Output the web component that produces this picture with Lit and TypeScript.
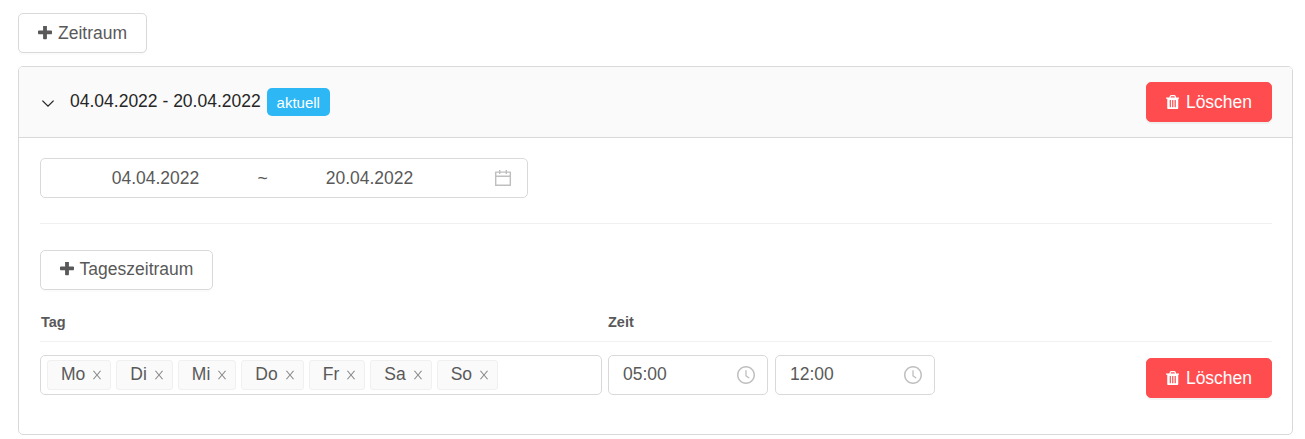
import { LitElement, html, css, svg } from "lit";
import { customElement } from "lit/decorators.js";

const plusIcon = html`<svg class="plus" viewBox="192 192 1408 1408" fill="currentColor"><path d="M1600 736v192q0 40-28 68t-68 28h-416v416q0 40-28 68t-68 28h-192q-40 0-68-28t-28-68v-416h-416q-40 0-68-28t-28-68v-192q0-40 28-68t68-28h416v-416q0-40 28-68t68-28h192q40 0 68 28t28 68v416h416q40 0 68 28t28 68z"/></svg>`;
const trashIcon = html`<svg class="trash" viewBox="192 128 1408 1536" fill="currentColor"><path d="M704 1376v-704q0-14-9-23t-23-9h-64q-14 0-23 9t-9 23v704q0 14 9 23t23 9h64q14 0 23-9t9-23zm256 0v-704q0-14-9-23t-23-9h-64q-14 0-23 9t-9 23v704q0 14 9 23t23 9h64q14 0 23-9t9-23zm256 0v-704q0-14-9-23t-23-9h-64q-14 0-23 9t-9 23v704q0 14 9 23t23 9h64q14 0 23-9t9-23zm-544-992h448l-48-117q-7-9-17-11h-317q-10 2-17 11zm928 32v64q0 14-9 23t-23 9h-96v948q0 83-47 143.5t-113 60.5h-832q-66 0-113-58.5t-47-141.5v-952h-96q-14 0-23-9t-9-23v-64q0-14 9-23t23-9h309l70-167q15-37 54-63t79-26h320q40 0 79 26t54 63l70 167h309q14 0 23 9t9 23z"/></svg>`;
const calendarIcon = html`<svg class="ant" viewBox="64 64 896 896" fill="currentColor"><path d="M880 184H712v-64c0-4.4-3.6-8-8-8h-56c-4.4 0-8 3.6-8 8v64H384v-64c0-4.4-3.6-8-8-8h-56c-4.4 0-8 3.6-8 8v64H144c-17.7 0-32 14.3-32 32v664c0 17.7 14.3 32 32 32h736c17.7 0 32-14.3 32-32V216c0-17.7-14.3-32-32-32zm-40 656H184V460h656v380zM184 392V256h128v48c0 4.4 3.6 8 8 8h56c4.4 0 8-3.6 8-8v-48h256v48c0 4.4 3.6 8 8 8h56c4.4 0 8-3.6 8-8v-48h128v136H184z"/></svg>`;
const clockIcon = html`<svg class="ant clock" viewBox="64 64 896 896" fill="currentColor"><path d="M512 64C264.6 64 64 264.6 64 512s200.6 448 448 448 448-200.6 448-448S759.4 64 512 64zm0 820c-205.4 0-372-166.6-372-372s166.6-372 372-372 372 166.6 372 372-166.6 372-372 372z"/><path d="M686.7 638.6L544.1 535.5V288c0-4.4-3.6-8-8-8H488c-4.4 0-8 3.6-8 8v275.4c0 2.6 1.2 5 3.3 6.5l165.4 120.6c3.6 2.6 8.6 1.8 11.2-1.7l28.6-39c2.6-3.7 1.8-8.7-1.8-11.2z"/></svg>`;
const closeIcon = html`<svg class="close" viewBox="64 64 896 896" fill="currentColor"><path d="M563.8 512l262.5-312.9c4.4-5.2.7-13.1-6.1-13.1h-79.8c-4.7 0-9.2 2.1-12.3 5.7L511.6 449.8 295.1 191.7c-3-3.6-7.5-5.7-12.3-5.7H203c-6.8 0-10.5 7.9-6.1 13.1L459.4 512 196.9 824.9A7.95 7.95 0 0 0 203 838h79.8c4.7 0 9.2-2.1 12.3-5.7l216.5-258.1 216.5 258.1c3 3.6 7.5 5.7 12.3 5.7h79.8c6.8 0 10.5-7.9 6.1-13.1L563.8 512z"/></svg>`;
const chevron = html`<svg class="chevron" viewBox="0 0 14 9" fill="none" stroke="currentColor" stroke-width="1.3">${svg`<path d="M1.4 1.6 7 7.2l5.6-5.6"/>`}</svg>`;

const DAYS = ["Mo", "Di", "Mi", "Do", "Fr", "Sa", "So"];

@customElement("app-root")
export class AppRoot extends LitElement {
  static styles = css`
    :host {
      display: block;
      padding: 13px 12px 0 18px;
      font-family: "Liberation Sans", Arial, sans-serif;
      font-size: 17.5px;
      color: #595959;
      background: #fff;
    }
    * { box-sizing: border-box; }
    button {
      font: inherit;
      height: 40px;
      display: inline-flex;
      align-items: center;
      justify-content: center;
      gap: 6px;
      border-radius: 5px;
      cursor: pointer;
      padding: 0;
    }
    .default {
      background: #fff;
      border: 1px solid #d9d9d9;
      color: #595959;
      box-shadow: 0 2px 0 rgba(0, 0, 0, 0.015);
    }
    .add-period { width: 129px; display: flex; }
    .add-day { width: 173px; display: flex; padding-bottom: 2px; }
    .danger {
      width: 126px;
      background: #ff4d4f;
      border: 1px solid #ff4d4f;
      color: #fff;
      box-shadow: 0 2px 0 rgba(0, 0, 0, 0.045);
    }
    .plus { width: 14px; height: 14px; flex: none; }
    .trash { width: 13.5px; height: 14.7px; flex: none; }
    .danger span { margin-left: 0.5px; }
    .card {
      margin-top: 13px;
      border: 1px solid #d9d9d9;
      border-radius: 5px;
      overflow: hidden;
      height: 369px;
    }
    .head {
      height: 71px;
      background: #fafafa;
      border-bottom: 1px solid #d9d9d9;
      display: flex;
      align-items: center;
      padding: 0 20px 0 22px;
      color: #262626;
    }
    .chevron { width: 14px; height: 9px; flex: none; margin-right: 15px; margin-top: 2px; }
    .title { margin-right: 6px; padding-bottom: 2px; }
    .badge {
      width: 63px;
      height: 28px;
      border-radius: 5px;
      background: #2db7f5;
      color: #fff;
      font-size: 15px;
      display: flex;
      align-items: center;
      justify-content: center;
    }
    .head .danger { margin-left: auto; }
    .body { padding: 20px 20px 0 21px; }
    .range {
      width: 488px;
      height: 40px;
      border: 1px solid #d9d9d9;
      border-radius: 5px;
      display: flex;
      align-items: center;
      padding: 0 15px 0 11px;
    }
    .range-val { width: 207px; text-align: center; }
    .sep { width: 7px; display: flex; justify-content: center; color: #595959; }
    .ant { width: 18px; height: 18px; color: #bfbfbf; flex: none; margin-left: auto; }
    .clock { width: 18px; height: 18px; }
    .divider { height: 1px; background: #f0f0f0; }
    .first-divider { margin: 25px 0 26px; }
    .labels {
      display: grid;
      grid-template-columns: 567px 1fr;
      margin-top: 24px;
      height: 27px;
      align-items: start;
      font-size: 14.5px;
      font-weight: 700;
      padding-left: 1px;
    }
    .labels span { line-height: 16px; }
    .row { display: flex; align-items: flex-start; margin-top: 13px; }
    .tags {
      width: 562px;
      height: 40px;
      border: 1px solid #d9d9d9;
      border-radius: 5px;
      display: flex;
      align-items: center;
      gap: 5px;
      padding: 0 0 0 6px;
    }
    .tag {
      height: 30px;
      background: #fafafa;
      border: 1px solid #f0f0f0;
      border-radius: 3px;
      display: flex;
      align-items: center;
      padding: 0 7px 0 13px;
    }
    .tag-text { padding-bottom: 2px; }
    .close { width: 12px; height: 12px; color: #8c8c8c; margin-left: 6px; flex: none; }
    .time {
      width: 160px;
      height: 40px;
      margin-left: 6px;
      border: 1px solid #d9d9d9;
      border-radius: 5px;
      display: flex;
      align-items: center;
      padding: 0 12px 0 14px;
    }
    .time span { padding-bottom: 2px; }
    .time + .time { width: 160px; margin-left: 7px; }
    .row .danger { margin-left: auto; margin-top: 3px; }
  `;

  render() {
    return html`
      <button class="default add-period">${plusIcon}<span>Zeitraum</span></button>
      <section class="card">
        <header class="head">
          ${chevron}
          <span class="title">04.04.2022 - 20.04.2022</span>
          <span class="badge">aktuell</span>
          <button class="danger">${trashIcon}<span>Löschen</span></button>
        </header>
        <div class="body">
          <div class="range">
            <span class="range-val">04.04.2022</span>
            <span class="sep">~</span>
            <span class="range-val">20.04.2022</span>
            ${calendarIcon}
          </div>
          <div class="divider first-divider"></div>
          <button class="default add-day">${plusIcon}<span>Tageszeitraum</span></button>
          <div class="labels"><span>Tag</span><span>Zeit</span></div>
          <div class="divider"></div>
          <div class="row">
            <div class="tags">
              ${DAYS.map((d) => html`<span class="tag"><span class="tag-text">${d}</span>${closeIcon}</span>`)}
            </div>
            <div class="time"><span>05:00</span>${clockIcon}</div>
            <div class="time"><span>12:00</span>${clockIcon}</div>
            <button class="danger">${trashIcon}<span>Löschen</span></button>
          </div>
        </div>
      </section>
    `;
  }
}
